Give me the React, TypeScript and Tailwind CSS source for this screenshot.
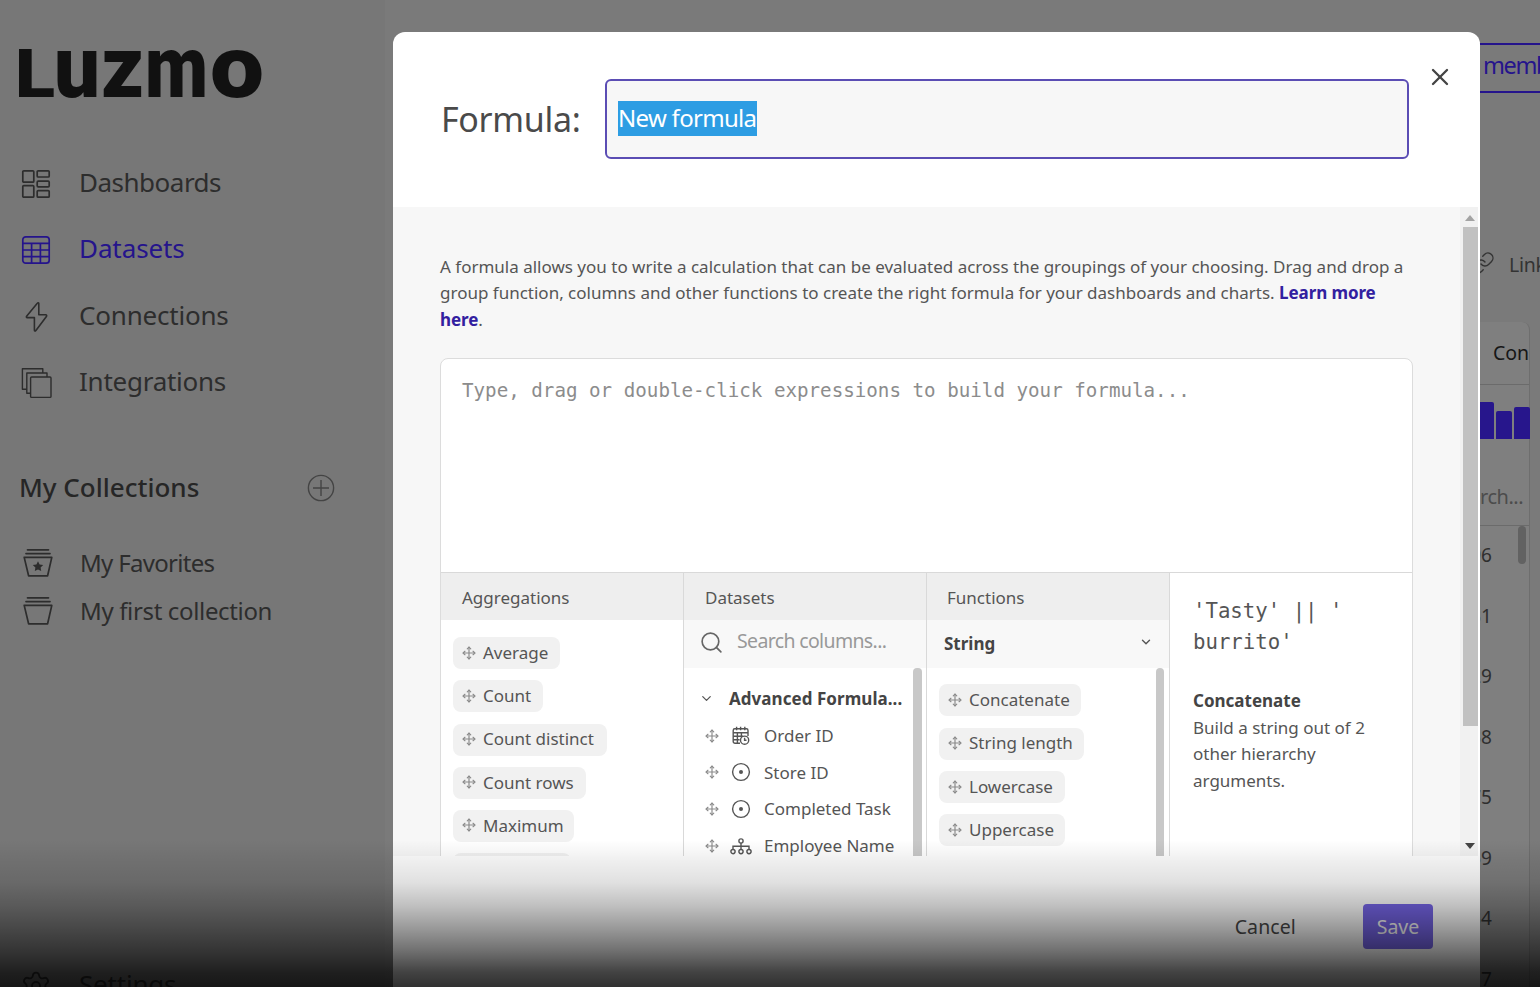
import type { ReactNode } from 'react';
import { ChevronDown, Link, Move, Search, Settings, X } from 'lucide-react';
import clsx from 'clsx';

const aggregations = [
  { name: 'Average', width: 'w-[107px]' },
  { name: 'Count', width: 'w-[90px]' },
  { name: 'Count distinct', width: 'w-[154px]' },
  { name: 'Count rows', width: 'w-[133px]' },
  { name: 'Maximum', width: 'w-[121px]' },
  { name: 'Median', width: 'w-[118px]' },
];

const functions = [
  { name: 'Concatenate', width: 'w-[142px]' },
  { name: 'String length', width: 'w-[145px]' },
  { name: 'Lowercase', width: 'w-[126px]' },
  { name: 'Uppercase', width: 'w-[126px]' },
];

const columns = [
  { name: 'Order ID', icon: <DateIcon /> },
  { name: 'Store ID', icon: <NumericIcon /> },
  { name: 'Completed Task', icon: <NumericIcon /> },
  { name: 'Employee Name', icon: <HierarchyIcon /> },
];

const values = ['96', '31', '29', '38', '75', '59', '34', '17'];

// each letter is stretched to the wordmark's own widths
const letters = [
  { char: 'L', x: 15, width: 40, size: 66 },
  { char: 'u', x: 54, width: 46, size: 88 },
  { char: 'z', x: 101, width: 43, size: 88 },
  { char: 'm', x: 145, width: 63, size: 88 },
  { char: 'o', x: 210, width: 54, size: 88 },
];

function Logo() {
  return (
    <svg width="280" height="90" viewBox="0 0 280 90" className="block fill-[#111]">
      {letters.map((l) => (
        <text
          key={l.char}
          x={l.x}
          y="77"
          fontFamily="Roboto, sans-serif"
          fontWeight="900"
          fontSize={l.size}
          textLength={l.width}
          lengthAdjust="spacingAndGlyphs"
        >
          {l.char}
        </text>
      ))}
    </svg>
  );
}

function DashboardIcon() {
  return (
    <svg width="30" height="30" viewBox="0 0 30 30" fill="none" stroke="currentColor" strokeWidth="1.7">
      <rect x="1.8" y="1.8" width="11" height="11.4" rx="1" />
      <rect x="1.8" y="16.6" width="11" height="11.6" rx="1" />
      <rect x="16.2" y="1.8" width="12" height="6.2" rx="1" />
      <rect x="16.2" y="12.2" width="12" height="5.6" rx="1" />
      <rect x="16.2" y="21.6" width="12" height="6.6" rx="1" />
    </svg>
  );
}

function TableIcon() {
  return (
    <svg width="30" height="30" viewBox="0 0 30 30" fill="none" stroke="currentColor" strokeWidth="1.7">
      <rect x="1.8" y="1.8" width="26.4" height="26.4" rx="3" />
      <path d="M1.8 8.4h26.4M1.8 15h26.4M1.8 21.6h26.4M10.6 8.4v19.8M19.4 8.4v19.8" />
    </svg>
  );
}

function BoltIcon() {
  return (
    <svg width="32" height="32" viewBox="0 0 32 32" fill="none" stroke="currentColor" strokeWidth="1.6" strokeLinejoin="round">
      <path d="M17.3 2.2 6.6 15.2c-.5.7-.2 1.4.6 1.4h7.2v12.6c0 1 .9 1.2 1.5.4L26.4 15.4c.6-.8.2-1.6-.7-1.6h-6.9V2.6c0-1-.9-1.2-1.5-.4z" />
    </svg>
  );
}

function StackIcon() {
  return (
    <svg width="32" height="32" viewBox="0 0 32 32" fill="none" stroke="currentColor" strokeWidth="1.4" strokeLinejoin="round">
      <rect x="10.6" y="10" width="20.4" height="20.4" rx="1" />
      <path d="M10.6 26.2H6.8V6h20.2v4M6.8 22.2H2.4V1.8h20.4V6" />
    </svg>
  );
}

function CollectionIcon({ star }: { star?: boolean }) {
  return (
    <svg width="30" height="30" viewBox="0 0 30 30" fill="none" stroke="currentColor" strokeWidth="1.7" strokeLinejoin="round" strokeLinecap="round">
      <path d="M4.5 1.8h21M3 5.6h24M1.2 9.4h27.6l-4.2 18.4H5.6z" />
      {star && (
        <path
          d="M15 13.2l1.6 3.3 3.6.5-2.6 2.5.6 3.6-3.2-1.7-3.2 1.7.6-3.6-2.6-2.5 3.6-.5z"
          fill="currentColor"
          stroke="none"
        />
      )}
    </svg>
  );
}

function DateIcon() {
  return (
    <svg width="18" height="20" viewBox="0 0 18 20" fill="none" stroke="currentColor" strokeWidth="1.4">
      <path d="M8 17.3H3a1.8 1.8 0 0 1-1.8-1.8V4.4c0-1 .6-1.6 1.6-1.6h11.6c1 0 1.6.6 1.6 1.6V10" />
      <path d="M1.2 6.8H16M1.2 10.3H11M1.2 13.8h6.4M5.4 6.8v10.4M9.4 6.8v3.6M4.6.8v3.4M8.6.8v3.4M12.8.8v3.4" />
      <circle cx="12.6" cy="14.2" r="4.1" />
      <path d="M12.6 11.8v2.4h1.9" />
    </svg>
  );
}

function NumericIcon() {
  return (
    <svg width="20" height="20" viewBox="0 0 20 20" fill="none" stroke="currentColor" strokeWidth="1.4">
      <circle cx="10" cy="10" r="8.4" />
      <circle cx="10" cy="10" r="2" fill="currentColor" stroke="none" />
    </svg>
  );
}

function HierarchyIcon() {
  return (
    <svg width="22" height="18" viewBox="0 0 22 18" fill="none" stroke="currentColor" strokeWidth="1.4">
      <circle cx="11" cy="4" r="2.1" />
      <circle cx="3" cy="14.6" r="2.1" />
      <circle cx="11" cy="14.6" r="2.1" />
      <circle cx="19" cy="14.6" r="2.1" />
      <path d="M11 6.1v6.4M3 12.5V9.2h16v3.3" />
    </svg>
  );
}

function NavItem({ icon, label, active, className }: { icon: ReactNode; label: string; active?: boolean; className?: string }) {
  return (
    <div className={clsx('flex items-center', active ? 'text-[#25148c]' : 'text-[#2d2d2d]', className)}>
      <span className="mt-[2px] flex w-8 justify-center">{icon}</span>
      <span className="-mt-px ml-[27px] whitespace-nowrap text-[26px]">{label}</span>
    </div>
  );
}

function Sidebar() {
  return (
    <aside className="flex h-full w-[385px] shrink-0 flex-col bg-[#777] pl-5">
      <div className="-ml-5 mt-[20px] h-[90px]">
        <Logo />
      </div>
      <nav className="mt-[40px] flex flex-col">
        <NavItem icon={<DashboardIcon />} label="Dashboards" className="h-[66.4px] tracking-[-0.5px]" />
        <NavItem icon={<TableIcon />} label="Datasets" active className="h-[66px] tracking-[-0.1px]" />
        <NavItem icon={<BoltIcon />} label="Connections" className="h-[66.8px] tracking-[-0.2px]" />
        <NavItem icon={<StackIcon />} label="Integrations" className="h-[66.4px] tracking-[-0.25px]" />
      </nav>
      <div className="mt-[54px] flex h-[40px] items-center justify-between pr-[50px] text-[#262626]">
        <h2 className="-ml-px -mt-[2px] whitespace-nowrap text-[26px] font-medium">My Collections</h2>
        <svg width="28" height="28" viewBox="0 0 28 28" fill="none" stroke="#444" strokeWidth="1.4">
          <circle cx="14" cy="14" r="12.6" />
          <path d="M14 6v16M6 14h16" />
        </svg>
      </div>
      <div className="mt-[32px] flex flex-col text-[#2d2d2d]">
        <div className="flex h-12 items-center">
          <span className="ml-[3px]"><CollectionIcon star /></span>
          <span className="ml-[27px] whitespace-nowrap text-[24px] tracking-[-0.7px]">My Favorites</span>
        </div>
        <div className="flex h-12 items-center">
          <span className="ml-[3px]"><CollectionIcon /></span>
          <span className="ml-[27px] whitespace-nowrap text-[24px] tracking-[-0.35px]">My first collection</span>
        </div>
      </div>
      <NavItem icon={<Settings size={32} strokeWidth={1.4} />} label="Settings" className="mt-[317px] h-[66px] shrink-0 tracking-[-0.2px]" />
    </aside>
  );
}

function Background() {
  return (
    <main className="ml-auto flex h-full w-[80px] flex-col overflow-hidden">
      <div className="mt-[43px] flex h-[50px] items-center border-y-2 border-[#25148c] pl-[23px] text-[23.5px] tracking-[-1.4px] text-[#25148c]">
        <span className="-mt-[5px]">members</span>
      </div>
      <div className="mt-[154px] flex h-9 items-center text-[#333]">
        <Link size={24} strokeWidth={1.4} className="-mt-1 ml-[11px] shrink-0" />
        <span className="ml-[14px] text-[19.5px] tracking-[-0.3px]">Link</span>
      </div>
      <section className="mt-[39px] h-[665px] w-[70px] rounded-tr-lg border-r border-[#6e6e6e] bg-[#7f7f7f]">
        <div className="flex h-[63px] items-center border-b border-[#6b6b6b] pl-[33px] text-[19.5px] text-[#161616]">
          Con
        </div>
        <div className="flex h-[53.5px] items-end gap-[2px] pl-[17px]">
          <div className="h-[37px] w-[17px] shrink-0 rounded-t-[2px] bg-[#27168c]" />
          <div className="h-[28px] w-[16px] shrink-0 rounded-t-[2px] bg-[#27168c]" />
          <div className="h-[32px] w-[16px] shrink-0 rounded-t-[2px] bg-[#27168c]" />
        </div>
        <div className="flex h-[87.5px] items-center justify-end border-b border-[#6b6b6b] pr-[6px] pt-[31px] text-[20px] tracking-[-0.5px] text-[#4c4c4c]">
          Search...
        </div>
        <div className="flex">
          <div className="-mt-px w-[32px]">
            {values.map((v) => (
              <div key={v} className="flex h-[60.5px] items-center justify-end text-[19px] text-[#2e2e2e]">
                {v}
              </div>
            ))}
          </div>
          <div className="ml-[26px] h-[38px] w-2 rounded bg-[#626262]" />
        </div>
      </section>
    </main>
  );
}

function Tag({ name, width }: { name: string; width: string }) {
  return (
    <div className={clsx('flex h-[32px] shrink-0 items-center rounded-lg bg-[#f1f1f1] pl-[9px]', width)}>
      <Move size={14} strokeWidth={2} className="-mt-px shrink-0 text-[#8a8a8a]" />
      <span className="-mt-px ml-[7px] whitespace-nowrap">{name}</span>
    </div>
  );
}

function PanelHeader({ children }: { children: ReactNode }) {
  return <div className="flex h-[47px] shrink-0 items-center bg-[#eee] pl-[21px] pt-[2px]">{children}</div>;
}

function Panels() {
  return (
    <div className="grid h-full grid-cols-[242px_243px_243px_1fr] text-[17px] text-[#555]">
      <div className="flex flex-col">
        <PanelHeader>Aggregations</PanelHeader>
        <div className="flex flex-col gap-[11.2px] pl-3 pt-[17px]">
          {aggregations.map((a) => (
            <Tag key={a.name} {...a} />
          ))}
        </div>
      </div>

      <div className="flex flex-col border-l border-[#d9d9d9]">
        <PanelHeader>Datasets</PanelHeader>
        <div className="flex h-[48px] shrink-0 items-center bg-[#f8f8f8] pl-[15px]">
          <Search size={25} strokeWidth={1.6} className="-mt-[3px] text-[#666]" />
          <span className="ml-[13px] pb-[7px] text-[19.5px] tracking-[-0.65px] text-[#999]">Search columns...</span>
        </div>
        <div className="flex flex-1">
          <div className="w-[229px] pt-[11px]">
            <div className="flex h-[38px] items-center">
              <ChevronDown size={15} strokeWidth={2} className="ml-[15px]" />
              <span className="ml-[15px] mt-px whitespace-nowrap font-bold tracking-[0.05px] text-[#444]">Advanced Formula...</span>
            </div>
            {columns.map((c) => (
              <div key={c.name} className="flex h-[36.8px] items-center">
                <Move size={14} strokeWidth={2} className="ml-[21px] text-[#8a8a8a]" />
                <span className="ml-[11px] flex w-[22px] justify-center">{c.icon}</span>
                <span className="ml-[12px] whitespace-nowrap">{c.name}</span>
              </div>
            ))}
          </div>
          <div className="w-[9px] rounded-t bg-[#c8c8c8]" />
        </div>
      </div>

      <div className="flex flex-col border-l border-[#d9d9d9]">
        <PanelHeader>
          <span className="-ml-px">Functions</span>
        </PanelHeader>
        <div className="flex h-[48px] shrink-0 items-center justify-between bg-[#f8f8f8] pl-[17px] pr-4">
          <span className="font-bold text-[#444]">String</span>
          <ChevronDown size={14} strokeWidth={2.4} className="-mt-1" />
        </div>
        <div className="flex flex-1 justify-between">
          <div className="flex flex-col gap-[11.4px] pl-3 pt-4">
            {functions.map((f) => (
              <Tag key={f.name} {...f} />
            ))}
          </div>
          <div className="mr-[5px] w-[8px] rounded-t bg-[#c8c8c8]" />
        </div>
      </div>

      <div className="border-l border-[#d9d9d9] pl-[23px] pt-[23px]">
        <p className="whitespace-pre font-['DejaVu_Sans_Mono',monospace] text-[20.7px] leading-[31px]">
          {"'Tasty' || '\nburrito'"}
        </p>
        <p className="mt-[30px] leading-[26.5px]">
          <b className="text-[#444]">Concatenate</b>
          <br />
          Build a string out of 2
          <br />
          other hierarchy
          <br />
          arguments.
        </p>
      </div>
    </div>
  );
}

function FormulaModal() {
  return (
    <div className="absolute left-[393px] top-[32px] flex h-[955px] w-[1087px] flex-col overflow-hidden rounded-t-xl bg-white">
      <header className="flex h-[175px] shrink-0 pl-12">
        <h1 className="mt-[62px] w-[164px] whitespace-nowrap text-[34px] leading-[50px] tracking-[-0.3px] text-[#4a4a4a]">Formula:</h1>
        <div className="mt-[47px] h-[80px] w-[804px] rounded-md border-2 border-[#5b4db4] bg-[#f7f7f7] pl-[11px] pt-5">
          <span className="inline-block h-[35px] w-[139px] whitespace-nowrap bg-[#2d9de3] text-[24px] leading-[33px] tracking-[-0.7px] text-white">
            New formula
          </span>
        </div>
        <X size={28} strokeWidth={2} className="ml-[17px] mt-[31px] text-[#444]" />
      </header>

      <div className="flex h-[649px] shrink-0 bg-[#f7f7f7]">
        <div className="flex w-[1067px] flex-col overflow-hidden pl-[47px] pt-[47px]">
          <p className="whitespace-nowrap text-[17px] leading-[26.4px] text-[#555]">
            A formula allows you to write a calculation that can be evaluated across the groupings of your choosing. Drag and drop a
            <br />
            group function, columns and other functions to create the right formula for your dashboards and charts.{' '}
            <b className="tracking-[-0.1px] text-[#3220a0]">Learn more</b>
            <br />
            <b className="tracking-[-0.1px] text-[#3220a0]">here</b>.
          </p>
          <div className="mt-[25px] flex h-[560px] w-[973px] shrink-0 flex-col rounded-t-lg border border-[#dcdcdc] bg-white">
            <div className="h-[214px] shrink-0 border-b border-[#d9d9d9] pl-[21px] pt-[18px] font-['DejaVu_Sans_Mono',monospace] text-[19.2px] leading-[28px] text-[#8c8c8c]">
              Type, drag or double-click expressions to build your formula...
            </div>
            <Panels />
          </div>
        </div>
        <div className="flex w-[18px] flex-col items-center bg-[#f1f1f1] pl-[2px]">
          <div className="mt-2 border-x-[5px] border-b-[6px] border-x-transparent border-b-[#a3a3a3]" />
          <div className="mt-[6px] h-[499px] w-[15px] bg-[#c1c1c1]" />
          <div className="mt-[117px] border-x-[5px] border-t-[6px] border-x-transparent border-t-[#444]" />
        </div>
        <div className="flex-1 bg-white" />
      </div>

      <footer className="flex h-[131px] shrink-0 items-start justify-end pr-[47px] pt-12 text-[19.5px]">
        <button className="mr-[67px] h-[45px] pt-px tracking-[0.1px] text-[#4a4a4a]">Cancel</button>
        <button className="h-[45px] w-[70px] rounded bg-[#7665e8] pt-px text-white">Save</button>
      </footer>
    </div>
  );
}

export default function App() {
  return (
    <div className="relative flex h-[987px] w-[1540px] overflow-hidden bg-[#7a7a7a] font-['Noto_Sans',sans-serif]">
      <Sidebar />
      <Background />
      <FormulaModal />
      <div className="pointer-events-none absolute inset-x-0 bottom-0 h-[147px] bg-[linear-gradient(to_bottom,rgba(0,0,0,0)_0%,rgba(0,0,0,0.06)_13%,rgba(0,0,0,0.12)_29%,rgba(0,0,0,0.25)_45%,rgba(0,0,0,0.4)_60%,rgba(0,0,0,0.57)_76%,rgba(0,0,0,0.74)_90%,rgba(0,0,0,0.81)_100%)]" />
    </div>
  );
}
